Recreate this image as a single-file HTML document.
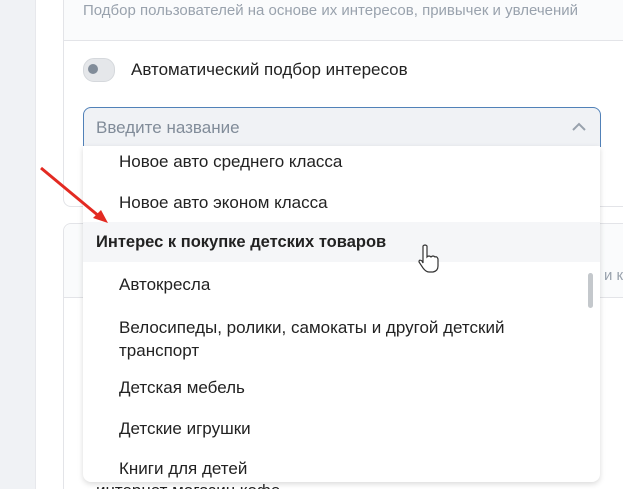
<!DOCTYPE html>
<html><head><meta charset="utf-8"><style>
html,body{margin:0;width:623px;height:489px;overflow:hidden}
body{background:#fff;font-family:"Liberation Sans",sans-serif;position:relative}
.abs{position:absolute;white-space:nowrap}
</style></head><body>
<div class="abs" style="left:0;top:0;width:35px;height:489px;background:#f0f2f5"></div>
<div class="abs" style="left:35px;top:0;width:1px;height:489px;background:#e7e8ec"></div>
<div class="abs" style="left:63px;top:-10px;width:570px;height:215px;border:1px solid #e3e4e8;border-radius:8px;background:#fff"></div>
<div class="abs" style="left:64px;top:0;width:559px;height:40px;background:#fafbfc;border-bottom:1px solid #e3e4e8"></div>
<div class="abs" style="left:83px;top:2px;font-size:15px;color:#99a2ad">Подбор пользователей на основе их интересов, привычек и увлечений</div>
<div class="abs" style="left:83px;top:58px;width:30px;height:22px;border-radius:11px;background:#e5e7ea;border:1px solid #d5d8dc"></div>
<div class="abs" style="left:88px;top:64px;width:10px;height:10px;border-radius:50%;background:#818c99"></div>
<div class="abs" style="left:131px;top:60px;font-size:17px;color:#222">Автоматический подбор интересов</div>
<div class="abs" style="left:63px;top:223px;width:570px;height:266px;border:1px solid #e3e4e8;border-bottom:none;border-radius:8px 0 0 0;background:#fff;overflow:hidden"></div>
<div class="abs" style="left:64px;top:224px;width:559px;height:73px;background:#fafbfc;border-bottom:1px solid #e3e4e8;border-radius:8px 0 0 0"></div>
<div class="abs" style="left:604px;top:267px;font-size:15px;color:#99a2ad">и к</div>
<div class="abs" style="left:96px;top:481px;font-size:17px;color:#222">интернет магазин кофе</div>
<div class="abs" style="left:83px;top:107px;width:516px;height:38px;background:#f0f2f5;border:1px solid #5181b8;border-radius:8px 8px 0 0"></div>
<div class="abs" style="left:96px;top:118px;font-size:17px;color:#818c99">Введите название</div>
<svg class="abs" style="left:572px;top:122px" width="14" height="10"><path d="M1 8 L7 2 L13 8" fill="none" stroke="#99a2ad" stroke-width="2"/></svg>
<div class="abs" style="left:83px;top:146px;width:517px;height:336px;background:#fff;border-radius:0 0 8px 8px;box-shadow:0 2px 6px rgba(0,0,0,.15);overflow:hidden;font-size:17px;color:#222">
 <div class="abs" style="left:36px;top:6px">Новое авто среднего класса</div>
 <div class="abs" style="left:36px;top:47px">Новое авто эконом класса</div>
 <div class="abs" style="left:0;top:76px;width:517px;height:40px;background:#f5f6f8"></div>
 <div class="abs" style="left:13px;top:87px;font-weight:bold;font-size:16.5px">Интерес к покупке детских товаров</div>
 <div class="abs" style="left:36px;top:129px">Автокресла</div>
 <div class="abs" style="left:36px;top:170px;line-height:23px">Велосипеды, ролики, самокаты и другой детский<br>транспорт</div>
 <div class="abs" style="left:36px;top:232px">Детская мебель</div>
 <div class="abs" style="left:36px;top:273px">Детские игрушки</div>
 <div class="abs" style="left:36px;top:313px">Книги для детей</div>
 <div class="abs" style="left:505px;top:127px;width:5px;height:35px;border-radius:3px;background:#c4c8cc"></div>
</div>
<svg class="abs" style="left:38px;top:165px" width="75" height="65"><path d="M3 3 L62 52" stroke="#e32a22" stroke-width="3"/><path d="M70 58 L55 53 L63 45 Z" fill="#e32a22"/></svg>
<svg class="abs" style="left:418px;top:244px" width="24" height="30"><path d="M5 2 Q7 0 9 2 V13 Q11 11 13 13 Q15 11 17 13 Q19 12 20 15 V22 Q20 27 15 28 H11 Q8 28 5 24 L1 18 Q1 15 4 17 L5 19 Z" fill="#fff" stroke="#333" stroke-width="1.2"/></svg>
</body></html>
